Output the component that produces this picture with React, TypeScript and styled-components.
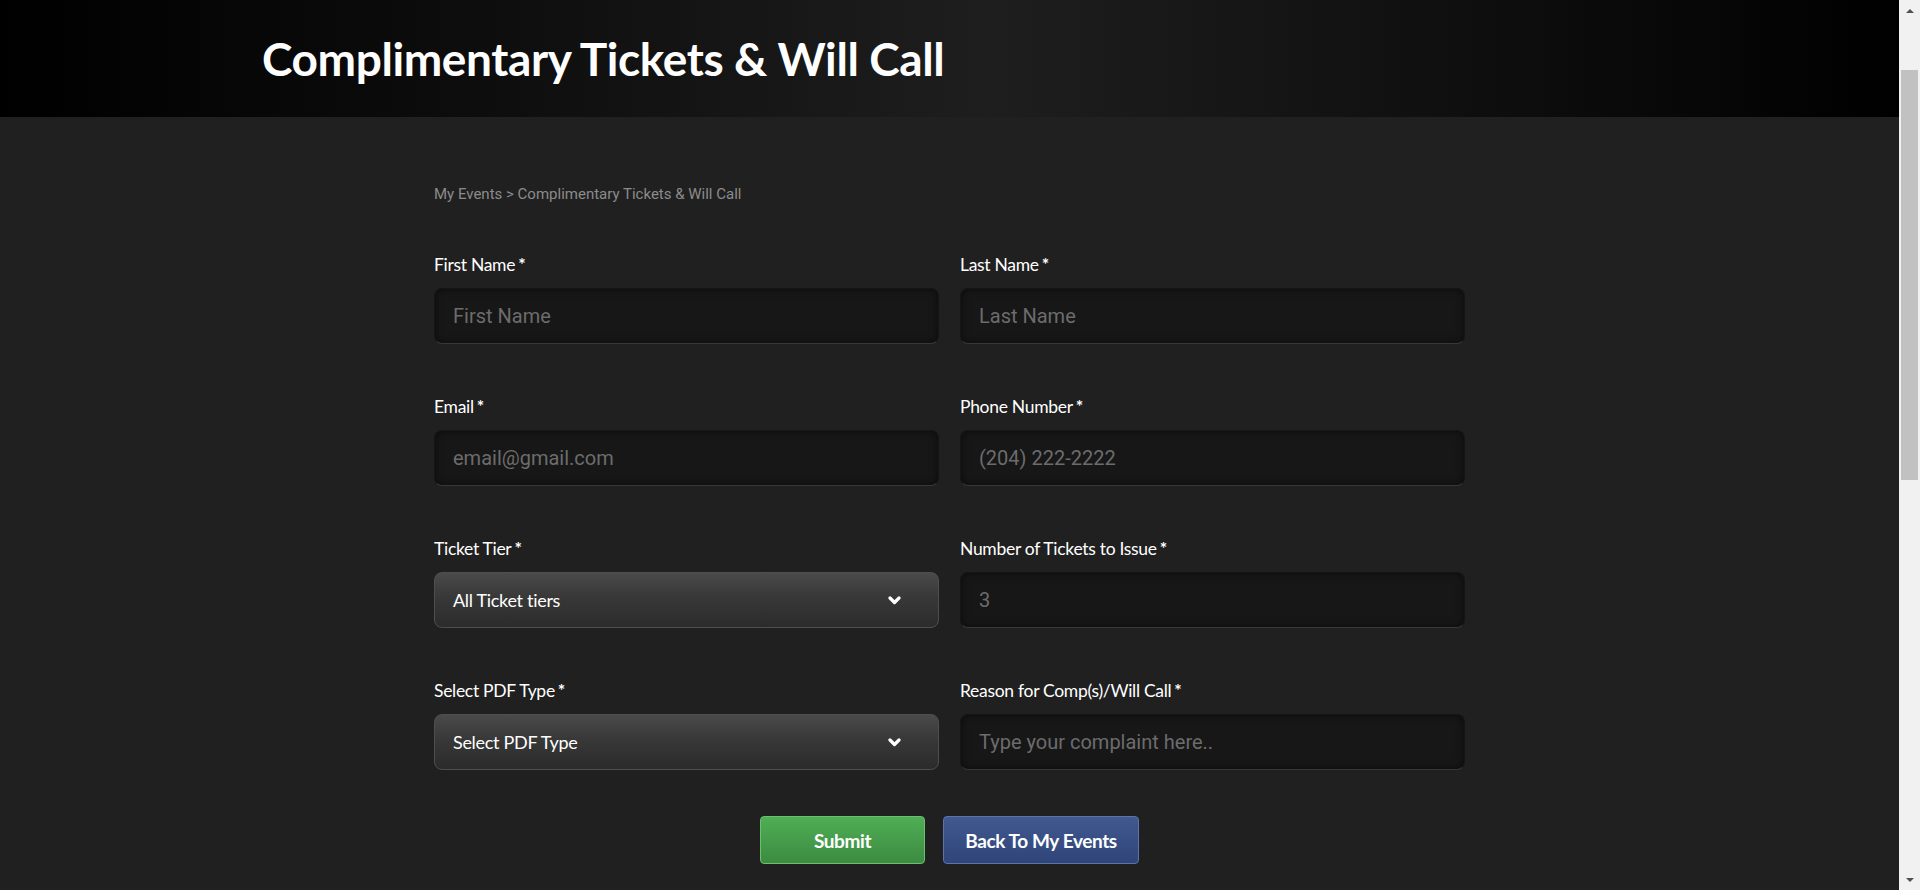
import React from "react";
import styled, { createGlobalStyle } from "styled-components";

const Global = createGlobalStyle`
  html, body { margin: 0; padding: 0; background: #202020; overflow: hidden; }
  body { font-family: "Lato", "Noto Sans", sans-serif; color: #fff; }
  * { box-sizing: border-box; }
`;

const Shell = styled.div`
  display: flex;
  height: 100vh;
  overflow: hidden;
  background: #202020;
`;

const Content = styled.div`
  flex: 1;
  min-width: 0;
  overflow: hidden;
`;

const ScrollTrack = styled.div`
  width: 21px;
  flex: none;
  display: flex;
  flex-direction: column;
  background: #f1f1f1;
`;

const ArrowBtn = styled.div<{ $dir: "up" | "down" }>`
  height: 21px;
  display: flex;
  align-items: center;
  justify-content: center;
  &::before {
    content: "";
    border-left: 4px solid transparent;
    border-right: 4px solid transparent;
    ${(p) => (p.$dir === "up" ? "border-bottom: 4px solid #505050;" : "border-top: 4px solid #505050;")}
  }
`;

const Thumb = styled.div`
  margin: 49px 2px 0;
  height: 410px;
  background: #c1c1c1;
`;

const Spacer = styled.div`
  flex: 1;
`;

const Header = styled.header`
  height: 117px;
  display: flex;
  align-items: center;
  padding-left: 262px;
  background: linear-gradient(90deg, #000 0%, #0d0d0d 25%, #1e1e1e 52%, #0d0d0d 80%, #000 100%);
`;

const Title = styled.h1`
  margin: 0;
  font-family: "Lato", sans-serif;
  font-weight: 700;
  font-size: 46px;
  letter-spacing: -0.4px;
  color: #fff;
`;

const Main = styled.main`
  width: 1031px;
  margin: 0 auto;
  padding-top: 67px;
  padding-bottom: 200px;
`;

const Crumbs = styled.div`
  font-family: "Roboto", sans-serif;
  font-size: 15px;
  line-height: 20px;
  color: #8b8b8b;
  margin-bottom: 50px;
`;

const Grid = styled.div`
  display: grid;
  grid-template-columns: 1fr 1fr;
  column-gap: 21px;
  row-gap: 52px;
`;

const Field = styled.div`
  display: flex;
  flex-direction: column;
  gap: 12px;
`;

const Label = styled.label`
  font-family: "Lato", sans-serif;
  font-size: 17.5px;
  line-height: 22px;
  color: #fff;
  letter-spacing: -0.3px;
  b { font-weight: 700; margin-left: 3px; }
`;

const Input = styled.input`
  height: 56px;
  width: 100%;
  border-radius: 8px;
  border: 1px solid #151515;
  border-bottom-color: #383838;
  background: #171717;
  box-shadow: inset 0 0 8px rgba(0, 0, 0, 0.55);
  padding: 0 18px;
  font-family: "Roboto", sans-serif;
  font-size: 20px;
  color: #6c6c6c;
  outline: none;
  &::placeholder { color: #6c6c6c; }
`;

const SelectBox = styled.div`
  height: 56px;
  border-radius: 8px;
  border: 1px solid #4e4e4e;
  background: linear-gradient(180deg, #4a4a4a 0%, #383838 45%, #2b2b2b 100%);
  display: flex;
  align-items: center;
  justify-content: space-between;
  padding: 0 37px 0 18px;
  font-family: "Lato", sans-serif;
  font-size: 18px;
  letter-spacing: -0.3px;
  color: #fff;
`;

const Actions = styled.div`
  display: flex;
  justify-content: center;
  gap: 18px;
  margin-top: 46px;
`;

const Button = styled.button<{ $tone: "green" | "blue" }>`
  height: 48px;
  padding: 0 12px;
  width: ${(p) => (p.$tone === "green" ? "165px" : "196px")};
  border-radius: 4px;
  font-family: "Lato", sans-serif;
  font-weight: 700;
  font-size: 19px;
  letter-spacing: -0.4px;
  color: #fff;
  cursor: pointer;
  border: 1px solid ${(p) => (p.$tone === "green" ? "#6cbf6f" : "#5b74aa")};
  background: ${(p) =>
    p.$tone === "green"
      ? "linear-gradient(180deg, #4fae55 0%, #3c8b41 100%)"
      : "linear-gradient(180deg, #40598f 0%, #30457a 100%)"};
`;

const Chevron = () => (
  <svg width="13" height="9" viewBox="0 0 13 9">
    <path d="M2 2 L6.5 6.5 L11 2" stroke="#fff" strokeWidth="3.2" fill="none" strokeLinecap="round" strokeLinejoin="round" />
  </svg>
);

const Select = ({ text }: { text: string }) => (
  <SelectBox>
    <span>{text}</span>
    <Chevron />
  </SelectBox>
);

export default function App() {
  return (
    <Shell>
      <Global />
      <Content>
        <Header>
          <Title>Complimentary Tickets &amp; Will Call</Title>
        </Header>
        <Main>
          <Crumbs>My Events &gt; Complimentary Tickets &amp; Will Call</Crumbs>
          <Grid>
            <Field>
              <Label>First Name<b>*</b></Label>
              <Input placeholder="First Name" />
            </Field>
            <Field>
              <Label>Last Name<b>*</b></Label>
              <Input placeholder="Last Name" />
            </Field>
            <Field>
              <Label>Email<b>*</b></Label>
              <Input placeholder="email@gmail.com" />
            </Field>
            <Field>
              <Label>Phone Number<b>*</b></Label>
              <Input placeholder="(204) 222-2222" />
            </Field>
            <Field>
              <Label>Ticket Tier<b>*</b></Label>
              <Select text="All Ticket tiers" />
            </Field>
            <Field>
              <Label>Number of Tickets to Issue<b>*</b></Label>
              <Input placeholder="3" />
            </Field>
            <Field>
              <Label>Select PDF Type<b>*</b></Label>
              <Select text="Select PDF Type" />
            </Field>
            <Field>
              <Label>Reason for Comp(s)/Will Call<b>*</b></Label>
              <Input placeholder="Type your complaint here.." />
            </Field>
          </Grid>
          <Actions>
            <Button $tone="green">Submit</Button>
            <Button $tone="blue">Back To My Events</Button>
          </Actions>
        </Main>
      </Content>
      <ScrollTrack>
        <ArrowBtn $dir="up" />
        <Thumb />
        <Spacer />
        <ArrowBtn $dir="down" />
      </ScrollTrack>
    </Shell>
  );
}
